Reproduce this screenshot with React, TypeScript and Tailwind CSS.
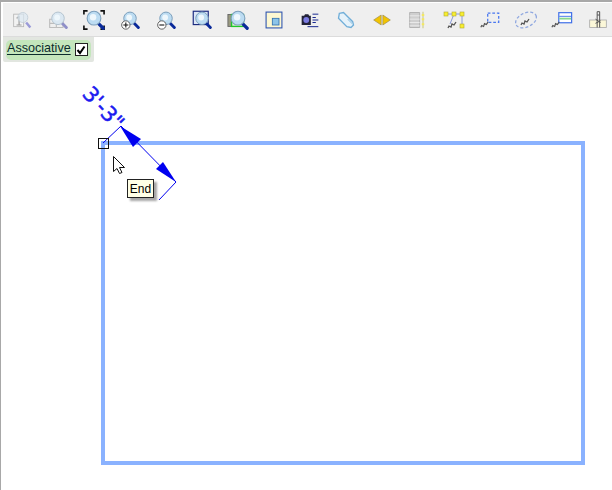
import type { ReactNode } from 'react';

function Lens({ dim = false }: { dim?: boolean }) {
  return (
    <g>
      <path d="M17 16l5 5" stroke={dim ? '#8f8fc8' : '#0a2a9a'} strokeWidth="3.5" strokeLinecap="round" />
      <circle cx="12" cy="10" r="7.5" fill={dim ? '#dbe8f2' : '#bcdcf2'} stroke={dim ? '#b4c4d0' : '#7c9fbc'} strokeWidth="1.2" />
      <circle cx="11" cy="9" r="3.5" fill="#eef7fc" />
    </g>
  );
}

function Icon({ size, children }: { size: number; children: ReactNode }) {
  return (
    <div className="flex w-9 shrink-0 items-center justify-center">
      <svg width={size} height={size} viewBox="0 0 24 24" fill="none">
        {children}
      </svg>
    </div>
  );
}

function Pencil({ x, y }: { x: number; y: number }) {
  return <path d={`M${x} ${y + 6}l1-2 2 1 1-3 2 1 2-3`} stroke="#555" strokeWidth="1.3" />;
}

const tools: { size: number; node: ReactNode }[] = [
  {
    size: 20,
    node: (
      <>
        <rect x="2" y="5" width="12" height="15" fill="#f2f2f2" stroke="#b5b5b5" />
        <path d="M5.5 10l3-2v10M5.5 18h6" stroke="#9a9a9a" strokeWidth="1.4" />
        <path d="M17 15l5 6" stroke="#9a9ad8" strokeWidth="3" />
        <circle cx="13" cy="9" r="6" fill="#dbe8f2" fillOpacity="0.7" stroke="#c0ccd6" />
      </>
    ),
  },
  {
    size: 20,
    node: (
      <>
        <path d="M2 11h16v10H2zM2 16h16M10 11v10" stroke="#bdbdbd" strokeWidth="1.3" />
        <Lens dim />
      </>
    ),
  },
  {
    size: 22,
    node: (
      <>
        <path d="M1 6V2h4M19 2h4v4M1 18v4h4M23 18v4h-4" stroke="#111" strokeWidth="1.8" />
        <Lens />
      </>
    ),
  },
  {
    size: 20,
    node: (
      <>
        <Lens />
        <circle cx="7" cy="18" r="5" fill="#fff" stroke="#444" />
        <path d="M4 18h6M7 15v6" stroke="#111" strokeWidth="1.3" />
      </>
    ),
  },
  {
    size: 20,
    node: (
      <>
        <Lens />
        <circle cx="7" cy="18" r="5" fill="#fff" stroke="#444" />
        <path d="M4 18h6" stroke="#111" strokeWidth="1.3" />
      </>
    ),
  },
  {
    size: 20,
    node: (
      <>
        <rect x="1.5" y="1.5" width="18" height="16" fill="#dce6f6" stroke="#1a2a80" strokeWidth="1.4" />
        <Lens />
      </>
    ),
  },
  {
    size: 22,
    node: (
      <>
        <rect x="1" y="6" width="9" height="13" fill="#9a9a80" stroke="#666" />
        <rect x="5" y="6" width="13" height="13" fill="#dff2d8" stroke="#22c82a" strokeWidth="1.5" />
        <Lens />
      </>
    ),
  },
  {
    size: 20,
    node: (
      <>
        <rect x="2.5" y="2.5" width="19" height="19" fill="#fdf8d2" stroke="#2f55b0" strokeWidth="1.3" />
        <rect x="10" y="10" width="8" height="8" fill="#8cc4e8" stroke="#2f70b0" />
      </>
    ),
  },
  {
    size: 20,
    node: (
      <>
        <path d="M2 7h3l1-2h4l1 2h2v11H2z" fill="#222238" />
        <circle cx="7.5" cy="12" r="3.5" fill="#7a7ae0" />
        <path d="M15 5h7M15 9h4M15 12h7M15 15h4M9 20h13" stroke="#1a2a90" strokeWidth="1.2" />
      </>
    ),
  },
  {
    size: 20,
    node: (
      <>
        <path d="M4 4l5-1 11 11 1 4-3 3-5-1L3 10z" fill="#e6f2fa" stroke="#70aed8" strokeWidth="1.6" />
        <path d="M14 11l6 6" stroke="#a8cfe8" strokeWidth="1.5" />
      </>
    ),
  },
  {
    size: 20,
    node: (
      <>
        <path d="M11 6v12l-9-6z" fill="#f2c400" stroke="#9a8a50" strokeWidth="0.8" />
        <path d="M13 6v12l9-6z" fill="#f2c400" stroke="#9a8a50" strokeWidth="0.8" />
      </>
    ),
  },
  {
    size: 20,
    node: (
      <>
        <path d="M2 3h12v18H2z" fill="#cfcfcf" stroke="#aaa" />
        <path d="M2 7h12M2 11h12M2 15h12M2 19h12" stroke="#eee" />
        <path d="M18 2v20" stroke="#d8d8a8" strokeWidth="2" />
        <path d="M16.5 6h3M16.5 11h3M16.5 17h3" stroke="#f4e860" strokeWidth="2.5" />
      </>
    ),
  },
  {
    size: 24,
    node: (
      <>
        <path d="M3 6h17v12" stroke="#8a9ad8" />
        <path d="M8 16l4-10" stroke="#8a9ad8" />
        <rect x="2" y="4" width="4" height="4" fill="#f8ee30" stroke="#b0a830" strokeWidth="0.6" />
        <rect x="10" y="4" width="4" height="4" fill="#f8ee30" stroke="#b0a830" strokeWidth="0.6" />
        <rect x="18" y="4" width="4" height="4" fill="#f8ee30" stroke="#b0a830" strokeWidth="0.6" />
        <rect x="18" y="16" width="4" height="4" fill="#f8ee30" stroke="#b0a830" strokeWidth="0.6" />
        <Pencil x={6} y={14} />
      </>
    ),
  },
  {
    size: 22,
    node: (
      <>
        <rect x="9.5" y="4.5" width="12" height="10" stroke="#4a78f0" strokeWidth="1.4" strokeDasharray="3 2" />
        <Pencil x={2} y={14} />
      </>
    ),
  },
  {
    size: 24,
    node: (
      <>
        <ellipse cx="12" cy="12" rx="11" ry="7" transform="rotate(-25 12 12)" stroke="#90a8e0" strokeWidth="1.3" strokeDasharray="3 2" />
        <Pencil x={7} y={11} />
      </>
    ),
  },
  {
    size: 22,
    node: (
      <>
        <rect x="8.5" y="4" width="14" height="11" fill="#fff" stroke="#3f70e8" strokeWidth="1.3" />
        <path d="M9 8h13" stroke="#3f70e8" />
        <path d="M9 10.5h13" stroke="#88d890" strokeWidth="2" />
        <Pencil x={1} y={14} />
      </>
    ),
  },
  {
    size: 20,
    node: (
      <>
        <rect x="2" y="12" width="20" height="9" fill="#fbf7d8" stroke="#aaa" />
        <path d="M11 2h3v4h-3zM11 6v15M14 6v15M9 11l6 4M9 16l6-3" stroke="#555" strokeWidth="1.2" />
      </>
    ),
  },
];

export default function App() {
  return (
    <div className="relative h-[490px] w-[612px] overflow-hidden border-l border-t-2 border-[#a8a8a8] bg-white font-['Liberation_Sans',sans-serif]">
      <div className="ml-[2px] mt-px flex h-[34px] items-center border-b border-[#dcdcdc] bg-[#efefef] pl-px pt-px">
        {tools.map((tool, i) => (
          <Icon key={i} size={tool.size}>
            {tool.node}
          </Icon>
        ))}
      </div>

      <div className="ml-[2px] flex h-[25px] w-[91px] items-center rounded-b-[2px] bg-[#e2e6e0] px-[3px]">
        <div className="flex h-[20px] w-[85px] items-center gap-[4px] rounded-[5px] bg-[#c4e6bc] pl-px">
          <span className="pb-[3px] text-[12.6px] leading-none text-[#0c2c2c] underline underline-offset-2">Associative</span>
          <span className="flex h-[13px] w-[13px] items-center justify-center border border-[#222] bg-white">
            <svg width="10" height="10" viewBox="0 0 10 10" fill="none">
              <path d="M1.5 5l2.5 3 4.5-6.500" stroke="#000" strokeWidth="2" />
            </svg>
          </span>
        </div>
      </div>

      {/* drawing canvas */}
      <div className="absolute left-[100px] top-[139px] h-[324px] w-[484px] border-4 border-[#8ab2ff]" />

      <svg className="absolute -left-px -top-[2px]" width="612" height="490" fill="none">
        <path d="M103 143L121 126L176 182L159 200" stroke="#0000f0" strokeWidth="1" />
        <path d="M120 126L141 139L133 147Z" fill="#0000f0" />
        <path d="M176 182L156 169L163 162Z" fill="#0000f0" />
        <rect x="98.5" y="138.5" width="10" height="10" stroke="#111" strokeWidth="1" />
        <path d="M113.5 156.5v15l3.500-3 2.500 5 2.500-1-2.500-5h5z" fill="#fff" stroke="#111" strokeWidth="1" />
      </svg>

      <span className="absolute left-[77px] top-[96px] rotate-[47deg] font-['DejaVu_Sans',sans-serif] text-[21px] leading-none text-[#1a1af0] [-webkit-text-stroke:0.5px_#1a1af0]">
        3'-3"
      </span>

      <div className="absolute left-[126px] top-[177px] flex h-[19px] w-[27px] items-center justify-center border border-[#222] bg-[#ffffe6] text-[12px] leading-none text-black shadow-[3px_3px_2px_rgba(0,0,0,0.35)]">
        End
      </div>
    </div>
  );
}
